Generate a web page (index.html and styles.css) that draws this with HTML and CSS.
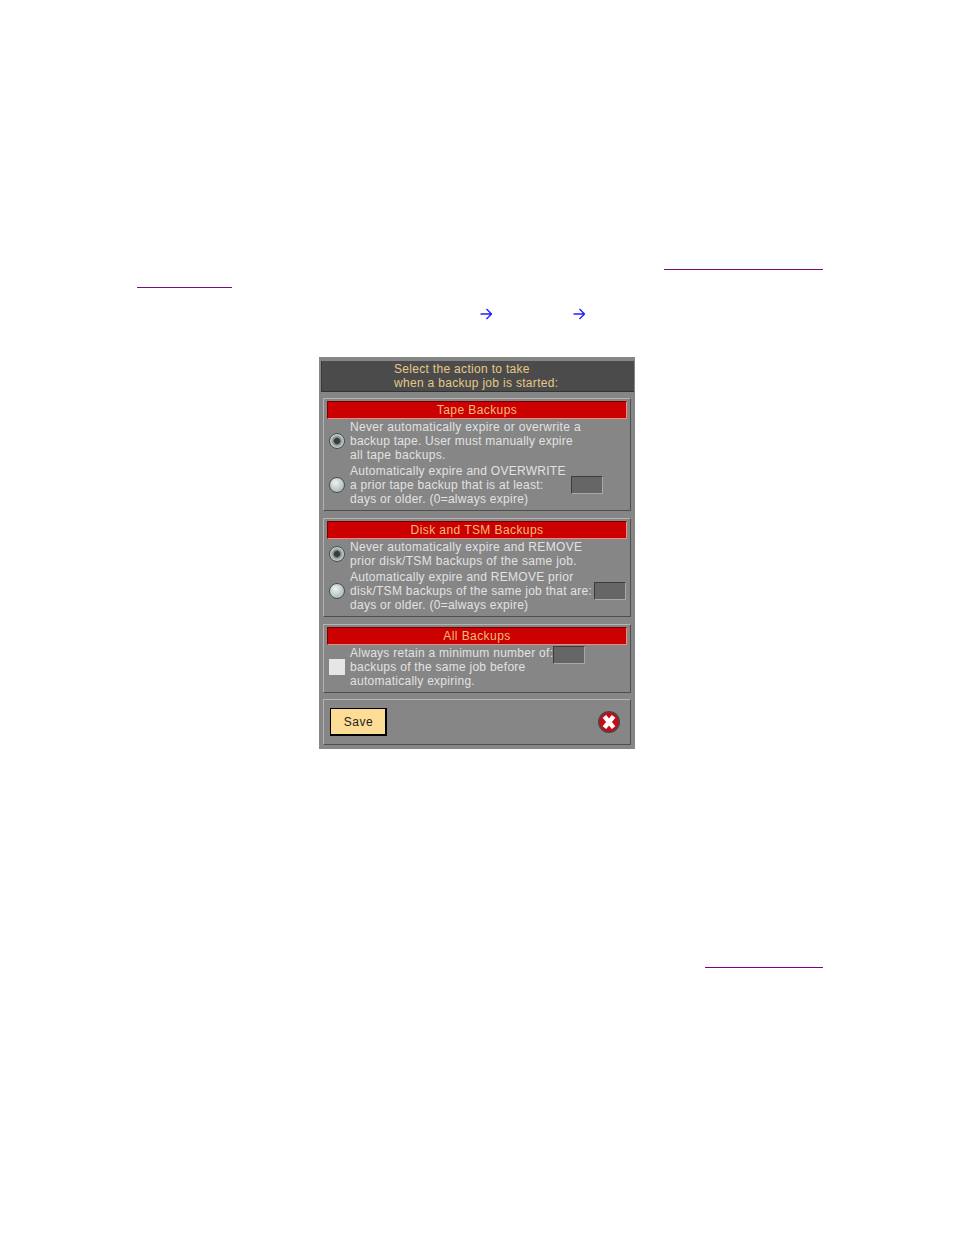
FILE: index.html
```html
<!DOCTYPE html>
<html lang="en">
<head>
<meta charset="utf-8">
<title>Backup expiration</title>
<link rel="stylesheet" href="styles.css">
</head>
<body>
<div class="doc">
  <div class="rule-row end"><span class="rule rule-a"></span></div>
  <div class="rule-row"><span class="rule rule-b"></span></div>
  <div class="arrows">
    <svg class="arrow" viewBox="0 0 12 12"><path d="M0.5 6H11M6.5 1L11.5 6L6.5 11" fill="none" stroke="#2020ff" stroke-width="1.4"/></svg>
    <svg class="arrow" viewBox="0 0 12 12"><path d="M0.5 6H11M6.5 1L11.5 6L6.5 11" fill="none" stroke="#2020ff" stroke-width="1.4"/></svg>
  </div>
  <div class="panel">
    <div class="title"><div class="title-text">Select the action to take<br>when a backup job is started:</div></div>

    <section class="group">
      <h2 class="head">Tape Backups</h2>
      <div class="opt">
        <span class="radio on"></span>
        <div class="txt">Never automatically expire or overwrite a<br><span class="tight">backup tape. User must manually expire</span><br>all tape backups.</div>
      </div>
      <div class="opt">
        <span class="radio"></span>
        <div class="txt fit w-tape">Automatically expire and OVERWRITE<br>a prior tape backup that is at least:<br>days or older. (0=always expire)</div>
        <span class="field"></span>
      </div>
    </section>

    <section class="group spaced">
      <h2 class="head">Disk and TSM Backups</h2>
      <div class="opt">
        <span class="radio on"></span>
        <div class="txt">Never automatically expire and REMOVE<br>prior disk/TSM backups of the same job.</div>
      </div>
      <div class="opt">
        <span class="radio"></span>
        <div class="txt fit w-disk">Automatically expire and REMOVE prior<br>disk/TSM backups of the same job that are:<br>days or older. (0=always expire)</div>
        <span class="field"></span>
      </div>
    </section>

    <section class="group spaced">
      <h2 class="head">All Backups</h2>
      <div class="opt">
        <span class="check"></span>
        <div class="txt fit w-all">Always retain a minimum number of:<br>backups of the same job before<br>automatically expiring.</div>
        <span class="field top"></span>
      </div>
    </section>

    <div class="group footer">
      <button class="save" type="button">Save</button>
      <svg class="close" viewBox="0 0 24 24">
        <circle cx="12" cy="12" r="11" fill="#4f4444"/>
        <circle cx="12" cy="12" r="9.4" fill="#c80a14"/>
        <path d="M7.4 6.4L16.6 17.6M16.6 6.4L7.4 17.6" stroke="#fff" stroke-width="4.6" fill="none"/>
      </svg>
    </div>
  </div>
  <div class="rule-row end last"><span class="rule rule-c"></span></div>
</div>
</body>
</html>
```
FILE: styles.css
```css
html, body { margin: 0; padding: 0; background: #fff; }
body { height: 1235px; overflow: hidden; font-family: "Liberation Sans", Arial, sans-serif; }
.doc { width: 686px; margin-left: 137px; padding-top: 268px; }
.rule-row { display: flex; height: 18px; }
.rule-row.end { justify-content: flex-end; }
.rule { display: block; height: 1px; background: #7a0f7a; margin-top: 1px; }
.rule-a { width: 159px; }
.rule-b { width: 95px; }
.rule-c { width: 118px; background: #800080; }
.rule-row.last { margin-top: 217px; }
.arrows { display: flex; gap: 81px; padding: 3px 0 0 343px; height: 50px; }
.arrow { width: 12px; height: 12px; display: block; margin-top: 1px; }
.panel {
  width: 316px; height: 392px; margin-left: 182px; box-sizing: border-box;
  background: #868686; padding: 4px 1px 0 2px;
}
.title {
  height: 31px; width: 313px; box-sizing: border-box;
  background: #4b4b4b; border-bottom: 1px solid #333; border-left: 1px solid #3a3a3a;
  color: #e6c987; font-size: 12px; line-height: 14px; letter-spacing: 0.31px; padding: 1px 0 0 72px;
}
.group {
  width: 308px; box-sizing: border-box; margin: 6px 0 0 2px;
  border: 1px solid #4f4f4f; border-top-color: #b4b4b4; border-left-color: #b4b4b4;
  padding: 2px 3px 4px 3px;
}
.group.spaced { margin-top: 7px; }
.head {
  margin: 0 0 1px; height: 18px; box-sizing: border-box; font-weight: normal;
  background: #cc0000; border: 1px solid #f08a80; border-top-color: #700; border-left-color: #700;
  color: #f4bd7c; font-size: 12px; line-height: 16px; letter-spacing: 0.42px; text-align: center;
}
.opt { display: flex; align-items: center; margin-bottom: 2px; color: #e2e2e2; }
.opt:last-child { margin-bottom: 0; }
.txt { font-size: 12px; line-height: 14px; letter-spacing: 0.33px; white-space: nowrap; margin-left: 5px; }
.tight { letter-spacing: 0.23px; }
.fit { letter-spacing: 0.27px; }
.w-tape { width: 221px; }
.w-disk { width: 244px; }
.w-all { width: 203px; }
.radio {
  flex: none; width: 16px; height: 16px; margin-left: 2px; box-sizing: border-box;
  border-radius: 50%; border: 1.5px solid #465050;
  background: radial-gradient(circle at 40% 35%, #eef2f2, #a5b2b2 85%);
}
.radio.on {
  background: radial-gradient(circle, #363c3c 0 2.5px, #8d9797 4px, #c4cccc 6.5px);
}
.check { flex: none; width: 16px; height: 16px; margin-left: 2px; background: #e6e6e6; }
.field {
  flex: none; width: 32px; height: 18px; box-sizing: border-box;
  background: #666; border: 1px solid #3c3c3c; border-right-color: #a8a8a8; border-bottom-color: #a8a8a8;
}
.field.top { align-self: flex-start; }
.footer {
  height: 46px; margin-top: 6px; display: flex; align-items: center; justify-content: space-between;
  padding: 0 9px 0 6px;
}
.save {
  width: 57px; height: 28px; padding: 0 0 0 1px; box-sizing: border-box; background: #fddc96;
  border: 1px solid #000; border-right-width: 2px; border-bottom-width: 2px; color: #222;
  font: 12px "Liberation Sans", Arial, sans-serif; letter-spacing: 0.5px;
}
.close { width: 24px; height: 24px; display: block; }
```
